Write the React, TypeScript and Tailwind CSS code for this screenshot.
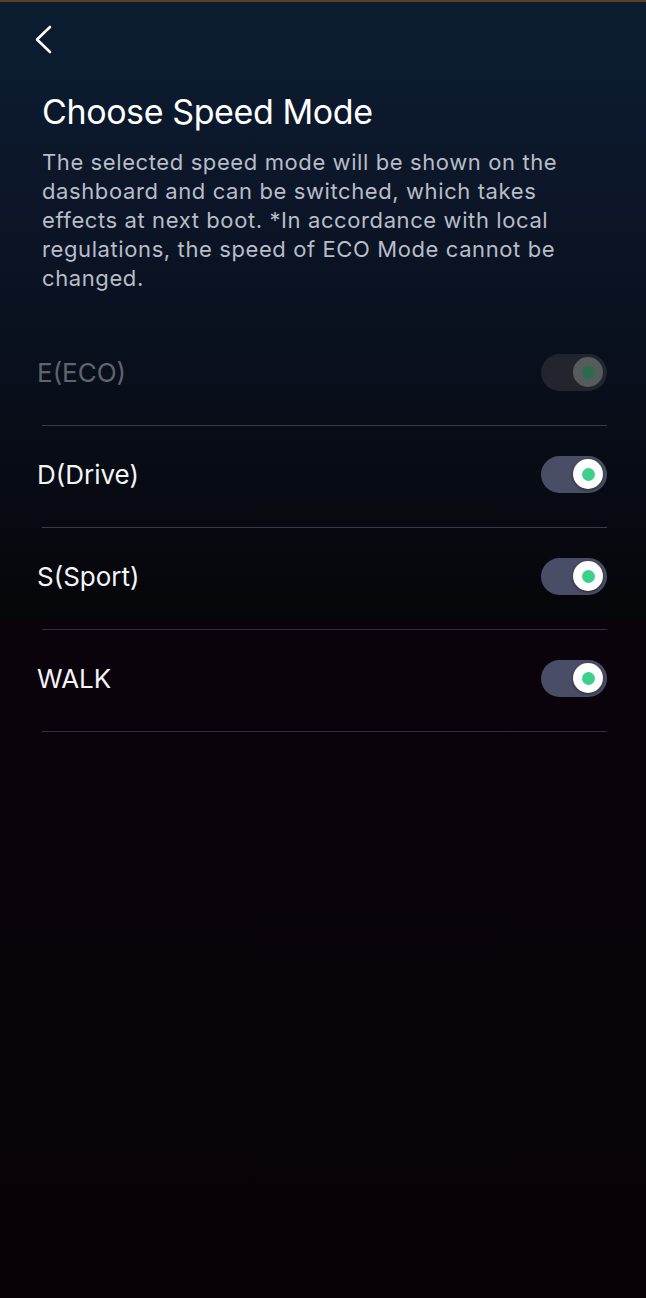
type Mode = { label: string; on: boolean; disabled?: boolean; lower?: boolean };

const modes: Mode[] = [
  { label: 'E(ECO)', on: true, disabled: true },
  { label: 'D(Drive)', on: true },
  { label: 'S(Sport)', on: true, lower: true },
  { label: 'WALK', on: true, lower: true },
];

function Toggle({ disabled }: { disabled?: boolean }) {
  return (
    <div
      className={
        'flex h-[37px] w-[66px] items-center justify-end rounded-full pr-[4px] ' +
        (disabled ? 'bg-[#22252e]' : 'bg-[#4a4d66]')
      }
    >
      <div
        className={
          'flex h-[30px] w-[30px] items-center justify-center rounded-full ' +
          (disabled ? 'bg-[#565c5e]' : 'bg-white shadow-[0_1px_3px_rgba(0,0,0,0.5)]')
        }
      >
        <div className={'h-[13px] w-[13px] rounded-full ' + (disabled ? 'bg-[#2c6a50]' : 'bg-[#3dcf8c]')} />
      </div>
    </div>
  );
}

export default function App() {
  return (
    <div
      className="min-h-[1298px] w-full bg-[linear-gradient(180deg,#0c1d31_0px,#0c1628_200px,#080d18_420px,#050609_621px,#0a030c_622px,#080208_100%)] text-white"
      style={{ fontFamily: 'Inter, "Liberation Sans", sans-serif' }}
    >
      {/* top strip */}
      <div className="h-[2px] bg-[#5e3f26]" />

      {/* back */}
      <div className="pl-[33px] pt-[22px]">
        <svg width="22" height="30" viewBox="0 0 22 30" fill="none">
          <polyline
            points="17,3 4,15.5 17,28"
            stroke="white"
            strokeWidth="2.6"
            strokeLinecap="round"
            strokeLinejoin="round"
          />
        </svg>
      </div>

      <div className="pl-[42px] pt-[36px]">
        <h1 className="text-[34px] leading-[44px] font-normal tracking-[-0.4px] text-white">Choose Speed Mode</h1>
        <p className="mt-[14px] w-[522px] text-[22px] leading-[29px] tracking-[0.6px] text-[#b8bdc7]">
          The selected speed mode will be shown on the dashboard and can be switched, which takes effects at next
          boot. *In accordance with local regulations, the speed of ECO Mode cannot be changed.
        </p>
      </div>

      <div className="mt-[31px]">
        {modes.map((m) => (
          <div key={m.label}>
            <div className="flex h-[101px] items-center justify-between pb-[5px] pl-[37px] pr-[39px]">
              <span className={'text-[26px] ' + (m.disabled ? 'text-[#5f646d]' : 'text-[#f4f4f6]')}>
                {m.label}
              </span>
              <Toggle disabled={m.disabled} />
            </div>
            <div className={'ml-[42px] mr-[39px] h-px ' + (m.lower ? 'bg-[#3a2b44]' : 'bg-[#363c4b]')} />
          </div>
        ))}
      </div>
    </div>
  );
}
